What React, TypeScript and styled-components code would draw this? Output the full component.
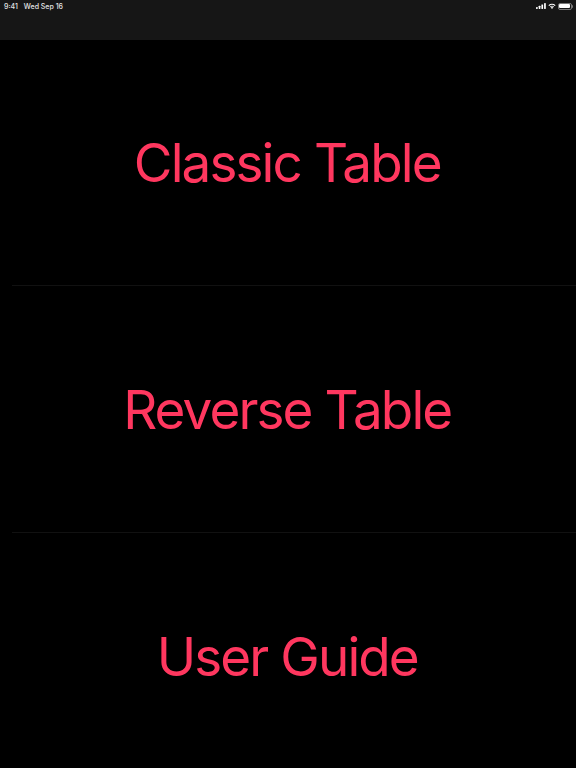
import React from 'react';
import styled, { createGlobalStyle } from 'styled-components';

const GlobalStyle = createGlobalStyle`
  html, body {
    margin: 0;
    padding: 0;
    background: #000;
  }
`;

const items = ['Classic Table', 'Reverse Table', 'User Guide'];

function App() {
  return (
    <Page>
      <GlobalStyle />
      <NavBar>
        <StatusBar>
          <StatusText>
            <span>9:41</span>
            <span>Wed Sep 16</span>
          </StatusText>
          <StatusIcons>
            <svg width="10" height="6" viewBox="0 0 10 6">
              <rect x="0" y="4" width="1.7" height="2" rx="0.4" fill="#fff" />
              <rect x="2.7" y="2.8" width="1.7" height="3.2" rx="0.4" fill="#fff" />
              <rect x="5.4" y="1.4" width="1.7" height="4.6" rx="0.4" fill="#fff" />
              <rect x="8.1" y="0" width="1.7" height="6" rx="0.4" fill="#fff" />
            </svg>
            <svg width="8" height="6" viewBox="0 0 8 6">
              <path d="M4 6 L2.7 4.5 A2 2 0 0 1 5.3 4.5 Z" fill="#fff" />
              <path d="M1.9 3.7 A3.2 3.2 0 0 1 6.1 3.7 L5.6 4.2 A2.5 2.5 0 0 0 2.4 4.2 Z" fill="#fff" />
              <path d="M0.4 2.2 A5.3 5.3 0 0 1 7.6 2.2 L6.8 3 A4.2 4.2 0 0 0 1.2 3 Z" fill="#fff" />
            </svg>
            <BatteryWrap>
              <Battery>
                <BatteryFill />
              </Battery>
              <BatteryCap />
            </BatteryWrap>
          </StatusIcons>
        </StatusBar>
      </NavBar>
      <Menu>
        {items.map((item) => (
          <MenuItem key={item}>
            <Label>{item}</Label>
            <Separator />
          </MenuItem>
        ))}
      </Menu>
    </Page>
  );
}

export default App;

const Page = styled.div`
  width: 576px;
  height: 768px;
  display: flex;
  flex-direction: column;
  background: #000;
  overflow: hidden;
`;

const NavBar = styled.div`
  height: 40px;
  flex-shrink: 0;
  background: #161616;
`;

const StatusBar = styled.div`
  height: 12px;
  padding: 0 3px 0 4px;
  display: flex;
  justify-content: space-between;
  align-items: center;
`;

const StatusText = styled.div`
  display: flex;
  gap: 6px;
  font-family: Inter, "Liberation Sans", sans-serif;
  font-size: 7px;
  font-weight: 500;
  color: #e4e4e4;
`;

const StatusIcons = styled.div`
  display: flex;
  align-items: center;
  gap: 2px;
`;

const BatteryWrap = styled.div`
  display: flex;
  align-items: center;
  gap: 0.5px;
`;

const Battery = styled.div`
  width: 14px;
  height: 7px;
  box-sizing: border-box;
  padding: 0.5px;
  border-radius: 2px;
  border: 0.5px solid #777;
`;

const BatteryFill = styled.div`
  width: 100%;
  height: 100%;
  border-radius: 1px;
  background: #fff;
`;

const BatteryCap = styled.div`
  width: 1px;
  height: 3px;
  border-radius: 0 1px 1px 0;
  background: #777;
`;

const Menu = styled.div`
  display: flex;
  flex-direction: column;
  margin-top: -1px;
`;

const MenuItem = styled.div`
  height: 247px;
  flex-shrink: 0;
  display: flex;
  flex-direction: column;
`;

const Label = styled.div`
  flex: 1;
  display: flex;
  align-items: center;
  justify-content: center;
  padding: 2px 1.5px 0 0;
  font-family: Inter, "Liberation Sans", sans-serif;
  font-size: 53px;
  font-weight: 400;
  letter-spacing: -1.9px;
  color: #ff375f;
`;

const Separator = styled.div`
  height: 1px;
  margin-left: 12px;
  background: #111;
`;
